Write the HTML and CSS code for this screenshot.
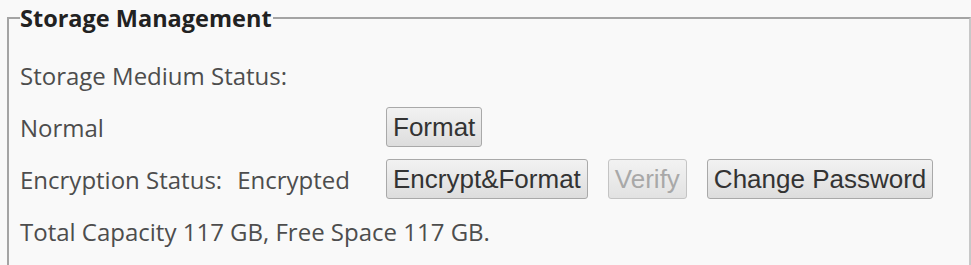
FILE: index.html
```html
<!DOCTYPE html>
<html lang="en">
<head>
<meta charset="utf-8">
<title>Storage Management</title>
<link rel="stylesheet" href="styles.css">
</head>
<body>
<fieldset class="storage">
  <legend class="storage-title">Storage Management</legend>
  <div class="rows">
    <div class="row"><span class="label label-wide">Storage Medium Status:</span></div>
    <div class="row">
      <span class="label">Normal</span>
      <div class="actions"><button class="btn" type="button">Format</button></div>
    </div>
    <div class="row">
      <span class="label">Encryption Status:<span class="value">Encrypted</span></span>
      <div class="actions">
        <button class="btn" type="button">Encrypt&amp;Format</button>
        <button class="btn" type="button" disabled>Verify</button>
        <button class="btn" type="button">Change Password</button>
      </div>
    </div>
    <div class="row"><span class="label label-wide">Total Capacity 117 GB, Free Space 117 GB.</span></div>
  </div>
</fieldset>
</body>
</html>
```

FILE: styles.css
```css
html, body {
  margin: 0;
  padding: 0;
  background: #f9f9f9;
}

body {
  width: 971px;
  height: 265px;
  overflow: hidden;
  font-family: "Open Sans", "Liberation Sans", sans-serif;
}

.storage {
  margin: 3px 0 0 7px;
  padding: 0 0 20px 11px;
  border: 2px solid #a4a4a4;
  border-right-color: #c8c8c8;
  min-width: 0;
}

.storage-title {
  margin-left: 0;
  padding: 0 1px 0 0;
  font-family: "Open Sans", "Liberation Sans", sans-serif;
  font-weight: 700;
  font-size: 23.5px;
  line-height: 30px;
  color: #222;
}

.rows {
  display: grid;
  grid-template-columns: 366px auto;
  grid-auto-rows: 40px;
  row-gap: 12px;
  margin-top: 22px;
}

.row {
  display: contents;
}

.label {
  display: flex;
  align-items: center;
  font-size: 24px;
  color: #4d4d4d;
  white-space: nowrap;
}

.label-wide {
  grid-column: 1 / -1;
}

.value {
  margin-left: 15px;
}

.actions {
  display: flex;
  align-items: center;
  gap: 20px;
}

.btn {
  height: 40px;
  padding: 0 6px;
  border: 1px solid #a9a9a9;
  border-radius: 3px;
  background: linear-gradient(#f2f2f2, #dddddd);
  color: #333;
  font-family: "Liberation Sans", Arial, sans-serif;
  font-size: 26px;
  line-height: 38px;
}

.btn:disabled {
  color: #a8a8a8;
  border-color: #c4c4c4;
  background: linear-gradient(#f2f2f2, #e2e2e2);
}
```
